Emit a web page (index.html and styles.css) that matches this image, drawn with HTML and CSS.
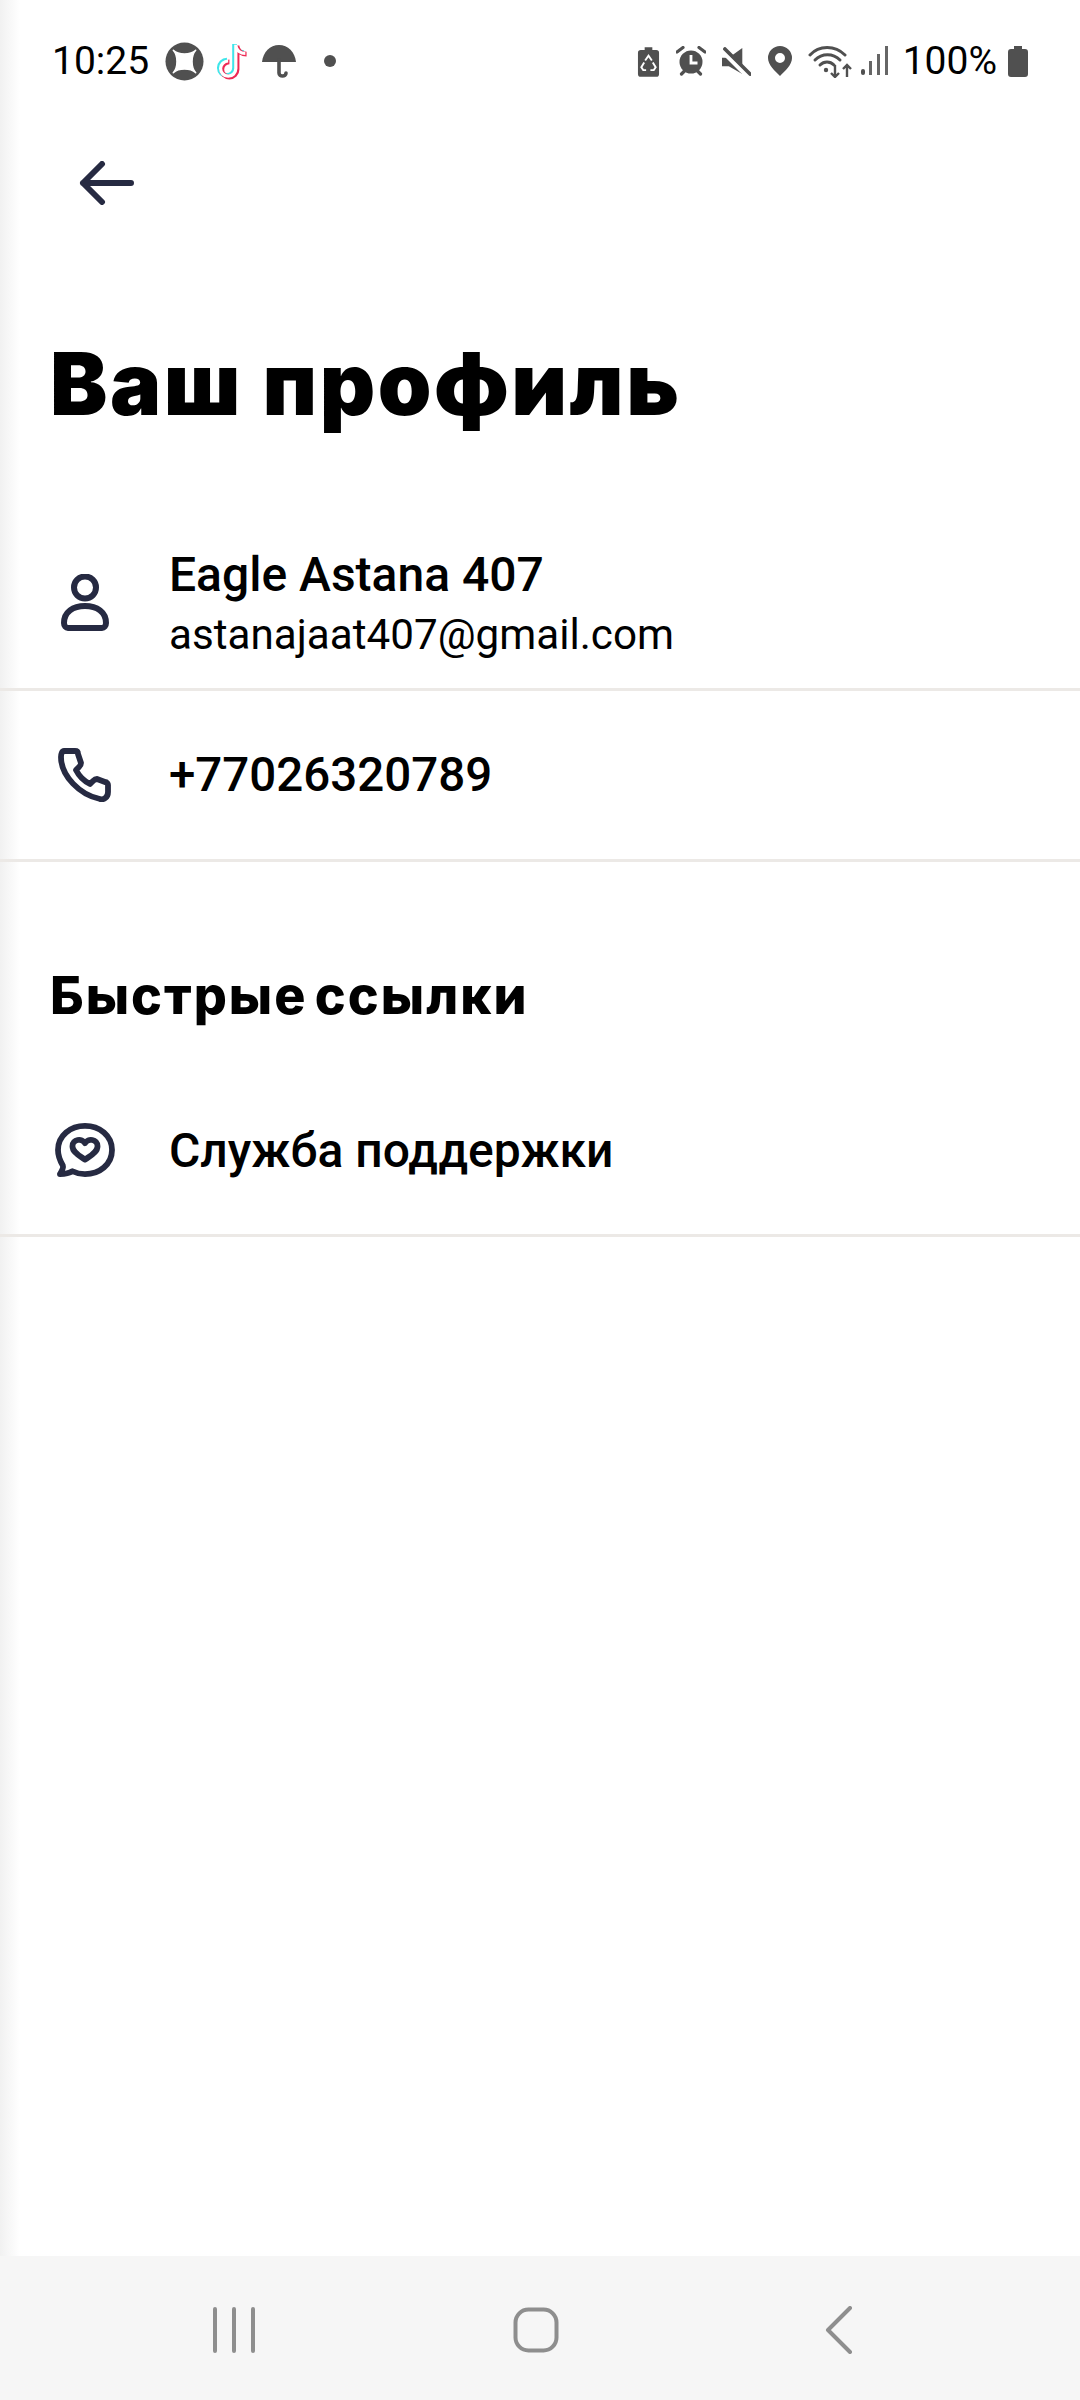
FILE: index.html
```html
<!DOCTYPE html>
<html lang="ru">
<head>
<meta charset="utf-8">
<title>Ваш профиль</title>
<link rel="stylesheet" href="styles.css">
</head>
<body>
<div class="screen">
  <div class="edge"></div>
  <header class="status">
    <span class="time">10:25</span>
    <svg class="si s-ring" viewBox="0 0 40 40"><circle cx="20" cy="20" r="19.5" fill="#505050"/><path d="M8.500 8.500C14 13.500 26 13.500 31.500 8.500C26.500 14 26.500 26 31.500 31.500C26 26.500 14 26.500 8.500 31.500C13.500 26 13.500 14 8.500 8.500Z" fill="#fff" stroke="#fff" stroke-width="1.500" stroke-linejoin="round"/></svg>
    <svg class="si s-tt" viewBox="0 0 36 42"><path d="M22 4v25a8 8 0 1 1-8-8M22 5c1 5 5 8 10 8" fill="none" stroke="#3fe6ea" stroke-width="5" transform="translate(-1.300 -0.800)"/><path d="M22 4v25a8 8 0 1 1-8-8M22 5c1 5 5 8 10 8" fill="none" stroke="#ee2a54" stroke-width="5" transform="translate(1.300 0.800)"/><path d="M22 4v25a8 8 0 1 1-8-8M22 5c1 5 5 8 10 8" fill="none" stroke="#fff" stroke-width="3.400"/></svg>
    <svg class="si s-umb" viewBox="0 0 34 33"><path d="M0 17C1 7 8 0 17 0s16 7 17 17z" fill="#505050"/><path d="M17 15v13c0 4 7 4 7 0" fill="none" stroke="#505050" stroke-width="3.600" stroke-linecap="round"/></svg>
    <span class="dot"></span>
    <span class="spacer"></span>
    <svg class="si s-bat2" viewBox="0 0 24 32"><path d="M8 1h8v3h4a3 3 0 0 1 3 3v22a3 3 0 0 1-3 3H4a3 3 0 0 1-3-3V7a3 3 0 0 1 3-3h4z" fill="#505050"/><path d="M8.500 15l3.500-5 3.500 5M16.500 17l3 5-2 3h-3.500M9.500 25H6.500l-2-3 3-5" fill="none" stroke="#fff" stroke-width="2"/></svg>
    <svg class="si s-alarm" viewBox="0 0 30 30"><path d="M1 6l6-4.500M29 6l-6-4.500" stroke="#505050" stroke-width="3.200" stroke-linecap="round"/><circle cx="15" cy="16" r="11.500" fill="#505050"/><path d="M15 9v8h6.500" fill="none" stroke="#fff" stroke-width="2.800"/><path d="M5.500 28l3-3M24.500 28l-3-3" stroke="#505050" stroke-width="3.200" stroke-linecap="round"/></svg>
    <svg class="si s-mute" viewBox="0 0 30 30"><path d="M0 11h7L21 1v27L7 20H0z" fill="#505050"/><path d="M0 3l27 27" stroke="#fff" stroke-width="6"/><path d="M3 2l26 26" stroke="#505050" stroke-width="3.800" stroke-linecap="round"/></svg>
    <svg class="si s-pin" viewBox="0 0 24 30"><path fill-rule="evenodd" d="M12 0a12 12 0 0 1 12 12c0 7-7 13-12 18C7 25 0 19 0 12A12 12 0 0 1 12 0zm0 7a5 5 0 1 0 0 10 5 5 0 0 0 0-10z" fill="#505050"/></svg>
    <svg class="si s-wifi" viewBox="0 0 44 34"><g fill="none" stroke="#505050" stroke-width="3" stroke-linecap="round"><path d="M2 11C11 1 27 1 37 11"/><path d="M7 16c7-7 18-7 25 0"/><path d="M12 21c4-4 10-4 14 0"/></g><circle cx="18" cy="26" r="2.200" fill="#505050"/><path d="M27 21v12M23 29l4 4 4-4M39 33V21M35 25l4-4 4 4" fill="none" stroke="#505050" stroke-width="2.400"/></svg>
    <svg class="si s-sig" viewBox="0 0 27 30"><rect x="0" y="23" width="4" height="6" rx="2" fill="#505050"/><rect x="8" y="15" width="3" height="14" fill="#666"/><rect x="16" y="8" width="3" height="21" fill="#666"/><rect x="24" y="0" width="3" height="29" fill="#666"/></svg>
    <span class="pct">100%</span>
    <svg class="si s-bat" viewBox="0 0 22 32"><path d="M7 1h8v3h3a3 3 0 0 1 3 3v22a3 3 0 0 1-3 3H4a3 3 0 0 1-3-3V7a3 3 0 0 1 3-3h3z" fill="#505050"/></svg>
  </header>

  <div class="topbar">
    <svg class="back" viewBox="0 0 56 44"><path d="M53 22H5M24 3L5 22l19 19" fill="none" stroke="#262a42" stroke-width="6" stroke-linecap="round" stroke-linejoin="round"/></svg>
  </div>

  <h1 class="title">Ваш профиль</h1>

  <section class="list">
    <div class="row row-user">
      <div class="ico"><svg class="i-user" viewBox="0 0 48 57"><circle cx="24" cy="13.500" r="11" fill="none" stroke="#262a42" stroke-width="6"/><path d="M3 49c0-11 9-17 21-17s21 6 21 17c0 3-2 5-4 5H7c-2 0-4-2-4-5z" fill="none" stroke="#262a42" stroke-width="6"/></svg></div>
      <div class="txt txt-user">
        <div class="name">Eagle Astana 407</div>
        <div class="mail">astanajaat407@gmail.com</div>
      </div>
    </div>
    <div class="row">
      <div class="ico"><svg class="i-phone" viewBox="0 0 54 54"><path d="M6 3h11c2 0 3 1 3 3l3 9c0 2-1 3-2 4l-3 3c3 6 8 11 14 14l3-3c1-1 3-2 4-2l8 3c2 0 3 2 3 3v7c0 6-5 8-8 7C22 47 3 28 3 9c0-3 1-6 3-6z" fill="none" stroke="#262a42" stroke-width="5.800" stroke-linejoin="round"/></svg></div>
      <div class="txt"><div class="phone">+77026320789</div></div>
    </div>
  </section>

  <h2 class="section">Быстрые ссылки</h2>

  <section class="list">
    <div class="row">
      <div class="ico"><svg class="i-help" viewBox="0 0 62 56"><path d="M31 3c15 0 28 10 28 25S46 53 31 53c-5 0-9-1-13-3-3 2-8 3-13 3 2-3 4-6 3-9-3-5-5-10-5-16C3 13 16 3 31 3z" fill="none" stroke="#262a42" stroke-width="6" stroke-linejoin="round"/><path d="M31 38C24 33 18 30 18 24c0-7 10-9 13-3 3-6 13-4 13 3 0 6-6 9-13 14z" fill="none" stroke="#262a42" stroke-width="6" stroke-linejoin="round"/></svg></div>
      <div class="txt"><div class="phone phone-help">Служба поддержки</div></div>
    </div>
  </section>

  <div class="grow"></div>

  <nav class="nav">
    <svg class="n-bars" viewBox="0 0 44 46"><path d="M3 2v42M22 2v42M41 2v42" stroke="#8e8e8e" stroke-width="4" stroke-linecap="round"/></svg>
    <svg class="n-home" viewBox="0 0 46 46"><rect x="2.500" y="2.500" width="41" height="41" rx="13" fill="none" stroke="#8e8e8e" stroke-width="4"/></svg>
    <svg class="n-back" viewBox="0 0 28 48"><path d="M25 2L3 24l22 22" fill="none" stroke="#8e8e8e" stroke-width="4" stroke-linecap="round" stroke-linejoin="round"/></svg>
  </nav>
</div>
</body>
</html>
```

FILE: styles.css
```css
* { box-sizing: border-box; }
html, body { margin: 0; padding: 0; background: #fff; }
.screen {
  position: relative;
  width: 1080px;
  height: 2400px;
  display: flex;
  flex-direction: column;
  font-family: Roboto, "Noto Sans", sans-serif;
  color: #000;
  overflow: hidden;
  background: #fff;
}
.edge {
  position: absolute;
  left: 0; top: 0; bottom: 144px;
  width: 20px;
  background: linear-gradient(to right, #f1f1f1, #fff);
}
.status {
  position: relative;
  height: 102px;
  flex: none;
  padding: 20px 0 0 52px;
  display: flex;
  align-items: center;
}
.time { font-size: 39px; width: 113px; }
.pct { font-size: 39px; margin-left: 15px; }
.si { display: block; flex: none; }
.s-ring { width: 39px; height: 39px; }
.s-tt { width: 36px; height: 40px; margin-left: 10px; }
.s-umb { width: 34px; height: 33px; margin-left: 12px; }
.dot { width: 12px; height: 12px; border-radius: 50%; background: #505050; margin-left: 28px; }
.spacer { flex: 1; }
.s-bat2 { width: 23px; height: 31px; }
.s-alarm { width: 30px; height: 30px; margin-left: 16px; }
.s-mute { width: 29px; height: 29px; margin-left: 16px; }
.s-pin { width: 24px; height: 30px; margin-left: 17px; }
.s-wifi { width: 44px; height: 34px; margin-left: 16px; }
.s-sig { width: 27px; height: 30px; margin-left: 9px; }
.s-bat { width: 22px; height: 32px; margin: 0 51px 0 10px; }

.topbar { position: relative; flex: none; height: 158px; padding: 59px 0 0 78px; }
.back { display: block; width: 56px; height: 44px; }

.title {
  position: relative;
  margin: 0;
  padding: 74px 0 0 50px;
  height: 240px;
  font-family: Inter, Roboto, sans-serif;
  font-weight: 900;
  font-size: 86px;
  line-height: 100px;
  letter-spacing: 2.5px;
}
.row {
  position: relative;
  display: flex;
  align-items: center;
  height: 171px;
  border-bottom: 3px solid #ece9e6;
}
.row-user { height: 191px; }
.ico { width: 169px; flex: none; display: flex; justify-content: center; }
.i-user { display: block; width: 48px; height: 57px; margin-top: 17px; }
.i-phone { display: block; width: 54px; height: 54px; }
.i-help { display: block; width: 60px; height: 54px; }
.txt-user { margin-top: 21px; }
.name { font-size: 48px; font-weight: 500; line-height: 61px; }
.mail { font-size: 42.200px; line-height: 60px; }
.phone { font-size: 47.500px; font-weight: 500; line-height: 61px; }
.phone-help { font-size: 48px; }

.section {
  position: relative;
  margin: 0;
  padding: 102px 0 0 50px;
  height: 204px;
  font-family: Inter, Roboto, sans-serif;
  font-weight: 800;
  font-size: 52px;
  line-height: 64px;
  letter-spacing: 2px;
  word-spacing: -6px;
}
.grow { flex: 1; }
.nav {
  position: relative;
  height: 144px;
  background: #f6f6f6;
  flex: none;
}
.n-bars { position: absolute; left: 212px; top: 51px; width: 44px; height: 46px; }
.n-home { position: absolute; left: 513px; top: 51px; width: 46px; height: 46px; }
.n-back { position: absolute; left: 825px; top: 50px; width: 28px; height: 48px; }
```
